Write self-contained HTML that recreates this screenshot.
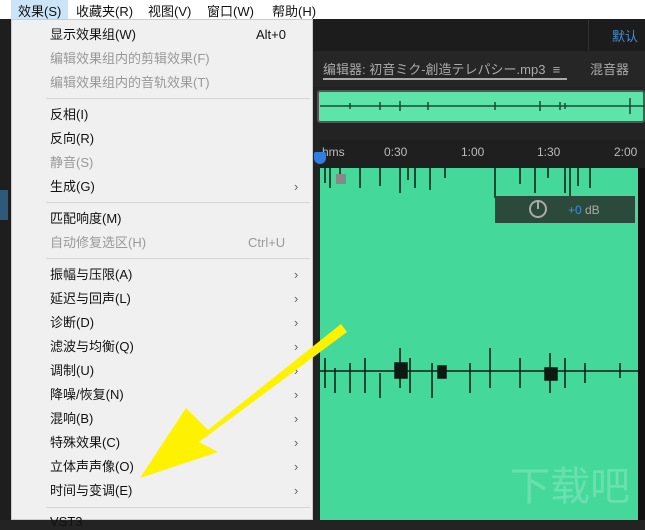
<!DOCTYPE html><html><head><meta charset="utf-8"><style>
*{margin:0;padding:0;box-sizing:border-box}
body{width:645px;height:520px;overflow:hidden;background:#232323;position:relative;font-family:"Liberation Sans","Noto Sans CJK SC",sans-serif}
.a{position:absolute}
.mb{left:0;top:0;width:645px;height:19px;background:#fff;font-size:13px;color:#111}
.mb span{position:absolute;top:1px}
.menu{left:11px;top:19px;width:302px;height:501px;background:#f0f0f0;border:1px solid #ccc}
.it{position:absolute;left:38px;font-size:13px;color:#111;line-height:16px}
.g{color:#999}
.ar{position:absolute;left:282px;font-size:13px;color:#666}
.sep{position:absolute;left:34px;width:264px;height:1px;background:#d6d6d6}
</style></head><body>
<div class="a mb"><span style="left:-6px">)</span><div class="a" style="left:11px;top:0;width:57px;height:19px;background:#cce4f7"></div><span style="left:18px">效果(S)</span><span style="left:76px">收藏夹(R)</span><span style="left:148px">视图(V)</span><span style="left:207px">窗口(W)</span><span style="left:272px">帮助(H)</span></div>
<div class="a" style="left:313px;top:19px;width:332px;height:32px;background:#1c1c1c"></div>
<div class="a" style="left:612px;top:26px;font-size:13px;color:#3f8fd8">默认</div>
<div class="a" style="left:588px;top:20px;width:1px;height:30px;background:#333"></div>
<div class="a" style="left:313px;top:51px;width:332px;height:36px;background:#262626"></div>
<div class="a" style="left:323px;top:59px;font-size:13px;color:#aaa">编辑器: 初音ミク-創造テレパシー.mp3 &nbsp;≡</div>
<div class="a" style="left:323px;top:78px;width:244px;height:2px;background:#aaa"></div>
<div class="a" style="left:590px;top:59px;font-size:13px;color:#aaa">混音器</div>
<div class="a" style="left:317px;top:90px;width:328px;height:33px;background:#5de4a8;border:2px solid #555;border-radius:3px"></div>
<svg class="a" style="left:320px;top:92px" width="325" height="30"><path d="M0 14h325" stroke="#1d4a33" stroke-width="1.5"/><g stroke="#1d4a33" stroke-width="1.5"><path d="M30 11v6M60 10v8M80 9v10M108 10v8M175 10v8M220 9v10M240 10v8M245 11v6M310 6v16"/></g></svg>
<div class="a" style="left:320px;top:140px;width:325px;height:28px;background:#1f1f1f"></div>
<div class="a" style="left:322px;top:145px;font-size:12px;color:#bbb">hms</div>
<div class="a" style="left:384px;top:145px;font-size:12px;color:#bbb">0:30</div>
<div class="a" style="left:461px;top:145px;font-size:12px;color:#bbb">1:00</div>
<div class="a" style="left:537px;top:145px;font-size:12px;color:#bbb">1:30</div>
<div class="a" style="left:614px;top:145px;font-size:12px;color:#bbb">2:00</div>
<div class="a" style="left:314px;top:152px;width:12px;height:12px;background:#2f7ee0;border-radius:2px 2px 6px 6px"></div>
<div class="a" style="left:320px;top:168px;width:318px;height:352px;background:#44d99a"></div>
<div class="a" style="left:638px;top:168px;width:7px;height:352px;background:#111"></div>
<div class="a" style="left:320px;top:370px;width:318px;height:2px;background:#254a38"></div>
<svg class="a" style="left:320px;top:168px" width="318" height="240">
<g stroke="#0c1a12" stroke-width="1.5">
<path d="M5 0v15M10 0v20M20 0v8M40 0v20M60 0v18M80 0v25M88 0v12M95 0v20M110 0v22M125 0v10M175 0v30M200 0v16M215 0v25M228 0v10M245 0v25M250 0v34M258 0v18M270 0v20"/>
<path d="M5 190v30M15 200v25M30 195v30M45 190v35M60 205v25M80 180v40M90 190v35M112 195v35M150 195v30M170 180v40M200 190v30M230 185v40M245 190v30M265 195v20M300 195v15"/>
<path d="M75 195h12v15h-12zM118 198h8v12h-8zM225 200h12v12h-12z" fill="#0c1a12"/>
</g>
<rect x="175" y="28" width="140" height="27" fill="#2c4a3c"/>
<text x="248" y="46" font-size="12" fill="#3d8fe0" font-family="Liberation Sans">+0</text><text x="265" y="46" font-size="12" fill="#aaa" font-family="Liberation Sans">dB</text>
<circle cx="218" cy="41" r="8" fill="none" stroke="#aaa" stroke-width="2"/><path d="M218 33v8" stroke="#aaa" stroke-width="2"/>
<rect x="16" y="6" width="10" height="10" fill="#888"/>
</svg>
<div class="a" style="left:0;top:19px;width:11px;height:501px;background:#1e1e1e"></div>
<div class="a" style="left:0;top:190px;width:8px;height:30px;background:#2d5a7a"></div>
<div class="a menu">
<div class="it" style="top:7px">显示效果组(W)</div><div class="it" style="top:7px;left:244px">Alt+0</div>
<div class="it g" style="top:31px">编辑效果组内的剪辑效果(F)</div>
<div class="it g" style="top:55px">编辑效果组内的音轨效果(T)</div>
<div class="sep" style="top:78px"></div>
<div class="it" style="top:87px">反相(I)</div>
<div class="it" style="top:111px">反向(R)</div>
<div class="it g" style="top:135px">静音(S)</div>
<div class="it" style="top:159px">生成(G)</div><div class="ar" style="top:159px">›</div>
<div class="sep" style="top:182px"></div>
<div class="it" style="top:191px">匹配响度(M)</div>
<div class="it g" style="top:215px">自动修复选区(H)</div><div class="it g" style="top:215px;left:236px">Ctrl+U</div>
<div class="sep" style="top:238px"></div>
<div class="it" style="top:247px">振幅与压限(A)</div><div class="ar" style="top:247px">›</div>
<div class="it" style="top:271px">延迟与回声(L)</div><div class="ar" style="top:271px">›</div>
<div class="it" style="top:295px">诊断(D)</div><div class="ar" style="top:295px">›</div>
<div class="it" style="top:319px">滤波与均衡(Q)</div><div class="ar" style="top:319px">›</div>
<div class="it" style="top:343px">调制(U)</div><div class="ar" style="top:343px">›</div>
<div class="it" style="top:367px">降噪/恢复(N)</div><div class="ar" style="top:367px">›</div>
<div class="it" style="top:391px">混响(B)</div><div class="ar" style="top:391px">›</div>
<div class="it" style="top:415px">特殊效果(C)</div><div class="ar" style="top:415px">›</div>
<div class="it" style="top:439px">立体声声像(O)</div><div class="ar" style="top:439px">›</div>
<div class="it" style="top:463px">时间与变调(E)</div><div class="ar" style="top:463px">›</div>
<div class="sep" style="top:487px"></div>
<div class="it" style="top:494px">VST3</div>
</div>
<svg class="a" style="left:0;top:0" width="645" height="520">
<polygon points="347,332 341,324 208,430 186,408 140,478 218,452 199,442" fill="#fff200"/>
<text x="510" y="500" font-size="40" fill="#fff" opacity="0.2" font-family="Noto Sans CJK SC">下载吧</text>
</svg>
</body></html>
